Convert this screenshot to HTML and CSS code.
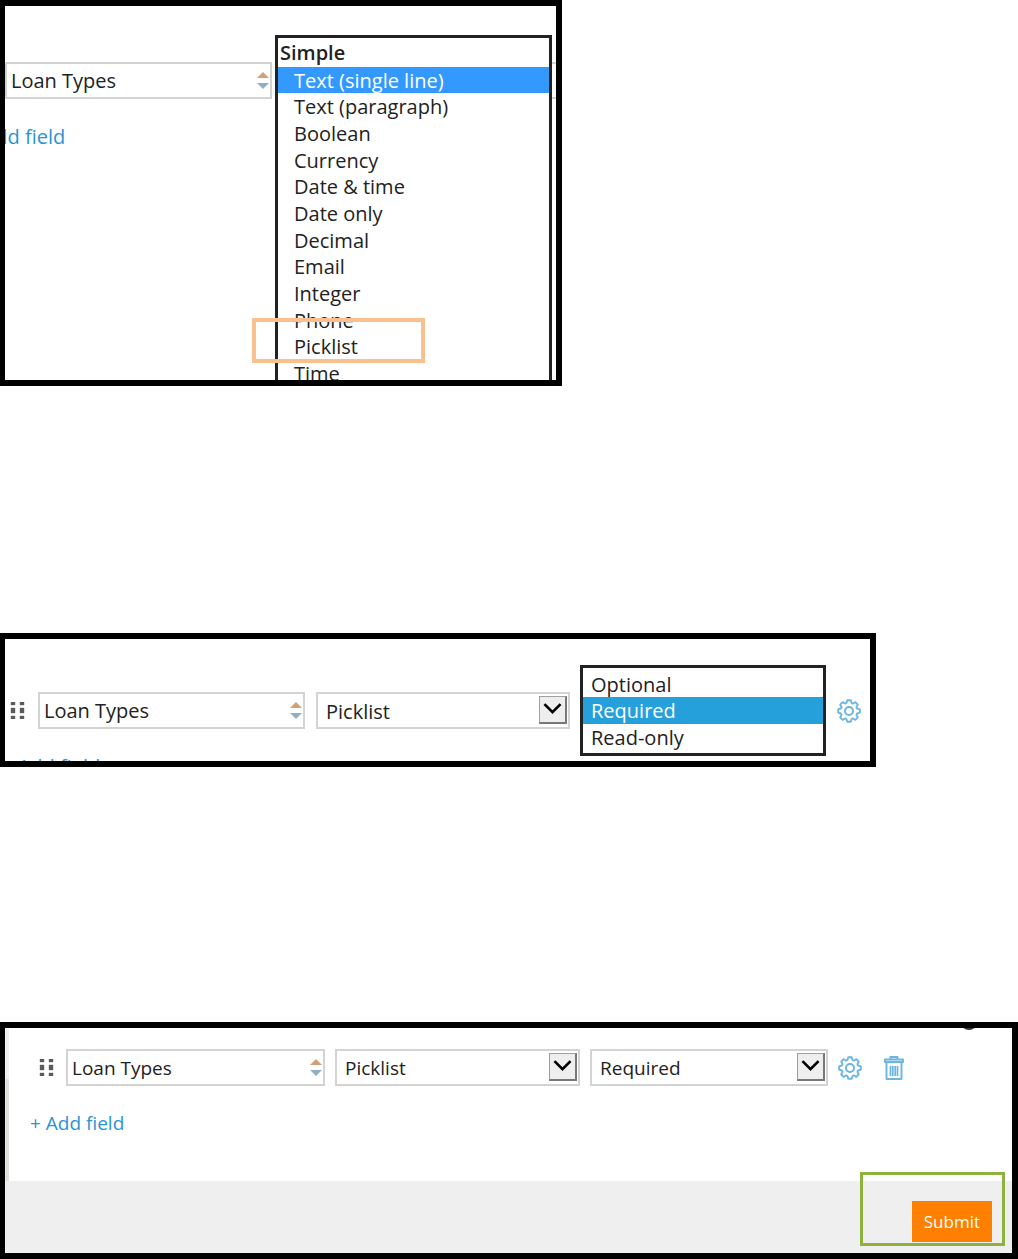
FILE: index.html
```html
<!DOCTYPE html>
<html lang="en">
<head>
<meta charset="utf-8">
<title>Loan Types</title>
<link rel="stylesheet" href="styles.css">
</head>
<body>
<svg class="defs" aria-hidden="true">
  <symbol id="sort" viewBox="0 0 12 17">
    <path d="M6 0L12 6H0z" fill="#d39f75"/>
    <path d="M6 17L12 11H0z" fill="#8fb0c4"/>
  </symbol>
  <symbol id="grip" viewBox="0 0 15 17">
    <path d="M1 0h4v3H1zM10 0h4v3h-4zM1 6h4v5H1zM10 6h4v5h-4zM1 14h4v3H1zM10 14h4v3h-4z" fill="#5a5a5a" stroke="#5a5a5a" stroke-width=".4"/>
  </symbol>
  <symbol id="chevron" viewBox="0 0 28 28">
    <path d="M5 8L14 17L23 8" fill="none" stroke="#000" stroke-width="3"/>
  </symbol>
  <symbol id="gear" viewBox="0 0 24 24">
    <path d="M10.3 1.2H13.7L14.5 3.8Q15.3 4.9 16 4.5L18.4 3.2L20.8 5.6L19.5 8Q19.1 8.7 20.2 9.5L22.8 10.3V13.7L20.2 14.5Q19.1 15.3 19.5 16L20.8 18.4L18.4 20.8L16 19.5Q15.3 19.1 14.5 20.2L13.7 22.8H10.3L9.5 20.2Q8.7 19.1 8 19.5L5.6 20.8L3.2 18.4L4.5 16Q4.9 15.3 3.8 14.5L1.2 13.7V10.3L3.8 9.5Q4.9 8.7 4.5 8L3.2 5.6L5.6 3.2L8 4.5Q8.7 4.9 9.5 3.8z" fill="none" stroke="#6bb5e0" stroke-width="1.9" stroke-linejoin="round"/>
    <circle cx="12" cy="12" r="4" fill="none" stroke="#6bb5e0" stroke-width="2"/>
  </symbol>
  <symbol id="trash" viewBox="0 0 20 24">
    <path d="M6.5 3.5V1H13.5V3.5M1 3.5H19V6H1zM2.5 6.5V23H17.5V6.5" fill="none" stroke="#6bb5e0" stroke-width="1.9" stroke-linejoin="round"/>
    <path d="M6.5 10V20M8.8 10V20M11.2 10V20M13.5 10V20" stroke="#6bb5e0" stroke-width="1.7"/>
  </symbol>
</svg>

<section class="figure figure-types">
  <div class="form">
    <div class="field-row">
      <svg class="grip"><use href="#grip"/></svg>
      <div class="box name"><input type="text" value="Loan Types" aria-label="Field name"><svg class="sort"><use href="#sort"/></svg></div>
      <div class="box type">
        <select class="list type-list" size="13" aria-label="Field type">
          <optgroup label="Simple">
            <option selected>Text (single line)</option>
            <option>Text (paragraph)</option>
            <option>Boolean</option>
            <option>Currency</option>
            <option>Date &amp; time</option>
            <option>Date only</option>
            <option>Decimal</option>
            <option>Email</option>
            <option>Integer</option>
            <option>Phone</option>
            <option>Picklist</option>
            <option>Time</option>
          </optgroup>
        </select>
      </div>
      <div class="box rule"></div>
    </div>
    <a class="add" href="#">+ Add field</a>
  </div>
  <div class="mark mark-picklist"></div>
</section>

<section class="figure figure-rules">
  <div class="form">
    <div class="field-row">
      <svg class="grip"><use href="#grip"/></svg>
      <div class="box name"><input type="text" value="Loan Types" aria-label="Field name"><svg class="sort"><use href="#sort"/></svg></div>
      <div class="box type">
        <select class="drop" aria-label="Field type"><option>Picklist</option></select>
        <svg class="chevron"><use href="#chevron"/></svg>
      </div>
      <div class="box rule">
        <select class="list rule-list" size="3" aria-label="Field rule">
          <option>Optional</option>
          <option selected>Required</option>
          <option>Read-only</option>
        </select>
      </div>
      <button class="icon" aria-label="Settings"><svg class="gear"><use href="#gear"/></svg></button>
    </div>
    <a class="add" href="#">+ Add field</a>
  </div>
</section>

<section class="figure figure-submit">
  <svg class="help" viewBox="0 0 20 20"><circle cx="10" cy="10" r="8" fill="none" stroke="#333" stroke-width="2"/></svg>
  <div class="panel">
    <div class="form">
      <div class="field-row">
        <svg class="grip"><use href="#grip"/></svg>
        <div class="box name"><input type="text" value="Loan Types" aria-label="Field name"><svg class="sort"><use href="#sort"/></svg></div>
        <div class="box type">
          <select class="drop" aria-label="Field type"><option>Picklist</option></select>
          <svg class="chevron"><use href="#chevron"/></svg>
        </div>
        <div class="box rule">
          <select class="drop" aria-label="Field rule"><option>Required</option></select>
          <svg class="chevron"><use href="#chevron"/></svg>
        </div>
        <button class="icon" aria-label="Settings"><svg class="gear"><use href="#gear"/></svg></button>
        <button class="icon" aria-label="Delete"><svg class="trash"><use href="#trash"/></svg></button>
      </div>
      <a class="add" href="#">+ Add field</a>
    </div>
  </div>
  <div class="footer">
    <button class="submit">Submit</button>
  </div>
  <div class="mark mark-submit"></div>
</section>
</body>
</html>
```
FILE: styles.css
```css
* {
  box-sizing: border-box;
}

body {
  margin: 0;
  background: #fff;
  color: #222;
  font-family: "Open Sans", sans-serif;
  font-size: 20px;
  line-height: 27px;
}

input, select, button {
  font: inherit;
  color: inherit;
}

.defs {
  display: none;
}

/* framed crops of the form */
.figure {
  position: relative;
  overflow: hidden;
  border: 6px solid #000;
  border-left-width: 5px;
}

.figure-types {
  max-width: 562px;
  height: 386px;
  padding-top: 56px;
  margin-bottom: 247px;
}

.figure-rules {
  max-width: 876px;
  height: 134px;
  padding-top: 53px;
  margin-bottom: 255px;
}

.figure-types .form {
  margin-left: -39px;
}

.figure-types .name {
  margin-left: 2px;
}

.figure-rules .form {
  margin-left: -4px;
}

/* field row */
.field-row {
  display: flex;
  align-items: center;
  gap: 11px;
  margin-bottom: 24px;
}

.grip {
  flex: none;
  width: 15px;
  height: 17px;
  margin-left: 9px;
  margin-right: 2px;
}

.box {
  position: relative;
  height: 37px;
  border: 2px solid #d3d3d3;
  background: #fff;
}

.name {
  flex: 0 0 267px;
}

.type {
  flex: 0 0 254px;
}

.rule {
  flex: 0 0 245px;
}

.box input, .drop {
  display: block;
  width: 100%;
  height: 100%;
  padding: 0 4px;
  border: 0;
  outline: 0;
  background: none;
}

.drop {
  appearance: none;
  padding: 2px 8px 0;
}

.sort {
  position: absolute;
  top: 8px;
  right: 1px;
  width: 12px;
  height: 17px;
}

.chevron {
  position: absolute;
  top: 2px;
  right: 1px;
  width: 28px;
  height: 28px;
  border: 1px solid #a0a0a0;
  border-right: 2px solid #777;
  border-bottom: 2px solid #777;
  background: #eee;
  pointer-events: none;
}

.icon {
  flex: none;
  display: block;
  padding: 0;
  border: 0;
  background: none;
}

.icon svg {
  display: block;
}

.gear {
  width: 24px;
  height: 24px;
}

.trash {
  width: 20px;
  height: 24px;
  margin-left: 12px;
}

.add {
  display: block;
  color: #2a93d5;
  text-decoration: none;
}

/* open drop-down lists */
.list {
  position: absolute;
  z-index: 1;
  margin: 0;
  padding: 3px 0;
  border: 3px solid #222;
  border-radius: 0;
  outline: 0;
  background: #fff;
  overflow: hidden;
}

.list option {
  min-height: 0;
  height: 27px;
  padding: 0 8px;
  line-height: 27px;
}

.list option:nth-of-type(3n+1) {
  height: 26px;
  line-height: 26px;
}

.type-list {
  top: -29px;
  left: -10px;
  width: 277px;
  height: 364px;
  padding-top: 1px;
}

.type-list optgroup {
  padding-left: 0;
  font-weight: 600;
}

.type-list option {
  padding-left: 16px;
  font-weight: 400;
}

.type-list option:checked {
  background: #39f linear-gradient(#39f, #39f);
  -webkit-text-fill-color: #fff;
}

.rule-list {
  top: -29px;
  left: -3px;
  width: 246px;
  height: 91px;
}

.rule-list option:checked {
  background: #26a0da linear-gradient(#26a0da, #26a0da);
  -webkit-text-fill-color: #fff;
}

/* submit */
.figure-submit {
  font-size: 19px;
}

.panel {
  padding: 21px 0 44px 25px;
  background: linear-gradient(#efefef 51px, #e1e0dd 51px) left / 4px 100% no-repeat;
}

.figure-submit .field-row {
  gap: 10px;
}

.figure-submit .name {
  flex: 0 1 259px;
}

.figure-submit .type {
  flex: 0 1 245px;
}

.figure-submit .rule {
  flex: 0 1 238px;
}

.footer {
  display: flex;
  justify-content: flex-end;
  padding: 20px 20px 11px;
  background: #efefef;
}

.submit {
  height: 41px;
  padding: 0 12px;
  border: 0;
  background: #ff8000;
  color: #fff;
  font-size: 17px;
}

.help {
  position: absolute;
  top: -17px;
  right: 33px;
  width: 20px;
  height: 20px;
}

/* highlight boxes */
.mark {
  position: absolute;
  z-index: 2;
  pointer-events: none;
}

.mark-picklist {
  top: 312px;
  left: 247px;
  width: 173px;
  height: 45px;
  border: 4px solid #fbc08f;
}

.mark-submit {
  right: 7px;
  bottom: 7px;
  width: 145px;
  height: 74px;
  border: 3px solid #8cb33e;
}
```
